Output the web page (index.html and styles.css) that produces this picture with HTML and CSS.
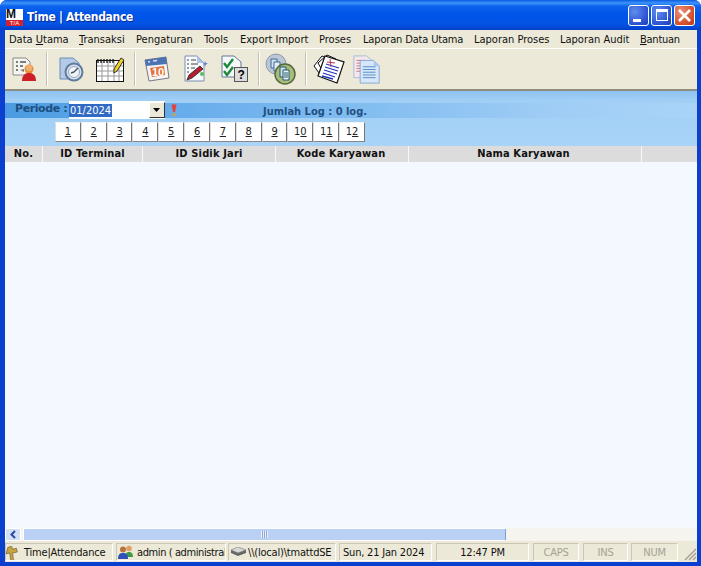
FILE: index.html
```html
<!DOCTYPE html>
<html>
<head>
<meta charset="utf-8">
<title>Time | Attendance</title>
<link rel="stylesheet" href="styles.css">
</head>
<body>
<div class="window">
  <div class="titlebar">
    <div class="app-logo"><span class="logo-m">M</span><span class="logo-bar">T/A</span></div>
    <div class="title">Time | Attendance</div>
    <div class="caption-btns">
      <div class="cbtn"><span class="min-glyph"></span></div>
      <div class="cbtn"><span class="max-glyph"></span></div>
      <div class="cbtn close"><svg width="21" height="21" viewBox="0 0 21 21"><path d="M5 5l11 11M16 5L5 16" stroke="#fff" stroke-width="2.6"/></svg></div>
    </div>
  </div>
  <div class="frame">
    <div class="menu">
      <span class="m1">Data <u>U</u>tama</span><span class="m2"><u>T</u>ransaksi</span><span class="m3">Pengaturan</span><span class="m4">Tools</span><span class="m5">Export Import</span><span class="m6">Proses</span><span class="m7">Laporan Data Utama</span><span class="m8">Laporan Proses</span><span class="m9">Laporan Audit</span><span class="m10"><u>B</u>antuan</span>
    </div>
    <div class="toolbar">
      <svg class="i28" viewBox="0 0 28 28"><path d="M3 3h13l4 4v13H3z" fill="#f4f4f0" stroke="#8a8a8a"/><path d="M6 7h2M6 11h2M6 15h2M10 7h6M10 11h3" stroke="#555" stroke-width="1.4"/><circle cx="19" cy="14" r="4.5" fill="#e98b32"/><circle cx="19" cy="13" r="3.2" fill="#f0b070"/><path d="M12 26c0-7 4-8 7-8s7 1 7 8z" fill="#cc1f26"/><path d="M10 15l4-1v3z" fill="#777"/></svg>
      <i class="sep"></i>
      <svg class="i28 clock" viewBox="0 0 28 28"><path d="M3 3h13l6 5v16H3z" fill="#b4cbe8" stroke="#6e8cb4"/><circle cx="17" cy="17" r="8.5" fill="#d8e2ee" stroke="#5f7a9e" stroke-width="2"/><circle cx="17" cy="17" r="5.5" fill="#eef3f8" stroke="#9ab"/><path d="M17 17l4-4M17 17l-3 1" stroke="#456" stroke-width="1.4"/></svg>
      <svg class="i30 cal" viewBox="0 0 30 30"><rect x="1.500" y="6.500" width="27" height="21" fill="#fff" stroke="#111"/><path d="M2 12h26M2 17h26M2 22h26M7 7v20M13 7v20M19 7v20M24 7v20" stroke="#999"/><path d="M3 5v4M6 5v4M9 5v4M12 5v4M15 5v4M18 5v4" stroke="#111" stroke-width="1.300"/><path d="M19 15l7-11 3 2-7 11-3 2z" fill="#f0d020" stroke="#333"/></svg>
      <i class="sep s2"></i>
      <svg class="i28 c10" viewBox="0 0 28 28"><path d="M2 5l21-3 3 21-20 3z" fill="#f4f4f4" stroke="#778"/><path d="M2 5l21-3 1 7-21 2z" fill="#4d73b5"/><path d="M5 7l2-.3M10 6l4-.6" stroke="#dde" stroke-width="1.500"/><path d="M7 13l14-2 1 9-13 2z" fill="#e8703a"/><text x="9" y="21" class="cal-num">10</text></svg>
      <svg class="i28 note" viewBox="0 0 28 28"><path d="M3 1h12l7 7v18H3z" fill="#f7f9fc" stroke="#7b8db0"/><path d="M15 1v7h7z" fill="#a9c4e8"/><path d="M5 5h2M5 9h2M5 13h2M5 17h2M9 5h5M9 9h7M9 13h4" stroke="#444" stroke-width="1.200"/><path d="M5 25l2-5 11-9 3 3-11 9z" fill="#b5202a" stroke="#222" stroke-width=".8"/><path d="M23 6l1 2 2 .5-2 1-.5 2-1-2-2-.5 2-1z" fill="#6a7fd0"/><circle cx="20" cy="19" r="2" fill="#58c060"/></svg>
      <svg class="i28 chk" viewBox="0 0 28 28"><path d="M1 1h12l7 6v15H1z" fill="#f5f8fb" stroke="#5e7896"/><path d="M3 8l3 4 6-8" fill="none" stroke="#1d8a3a" stroke-width="2.400"/><path d="M3 16l3 4 6-8" fill="none" stroke="#1d8a3a" stroke-width="2.400"/><rect x="13.500" y="12.500" width="13" height="14" fill="#dcdcdc" stroke="#555"/><text x="16.500" y="24" class="q">?</text></svg>
      <i class="sep s3"></i>
      <svg class="i32 cop" viewBox="0 0 32 32"><circle cx="11" cy="11" r="10" fill="#bcc6d4" stroke="#8f9bad"/><path d="M6 6h6v9H6z" fill="#cfe0f0" stroke="#3f6a96"/><path d="M9 9h6v9H9z" fill="#e6eff7" stroke="#3f6a96"/><circle cx="20" cy="21" r="10" fill="#a8bd7c" stroke="#55683c" stroke-width="1.500"/><path d="M15 14h6v10h-6z" fill="#cde1ea" stroke="#25596b"/><path d="M18 17h6v10h-6z" fill="#e8f4f7" stroke="#25596b"/><path d="M19 20h4M19 22h4M19 24h4" stroke="#25596b"/></svg>
      <i class="sep s4"></i>
      <svg class="i32 pap" viewBox="0 0 32 32"><path d="M1 13L9 3l9 4-9 17z" fill="#fff" stroke="#111"/><path d="M5 10l9-8 9 4-10 18z" fill="#fff" stroke="#111"/><path d="M12 3l19 6-7 21-19-7z" fill="#fff" stroke="#111" stroke-width="1.200"/><path d="M12 14l13 4M11 17l13 4M10 20l12 4M9 23l11 3M13 11l13 4" stroke="#2233bb" stroke-width="1.300"/><path d="M17 6l1 8M14 9l8 1" stroke="#c03050"/></svg>
      <svg class="doc" viewBox="0 0 32 32"><path d="M2 1h14l6 5v19H2z" fill="#f6e8ea" stroke="#9fb8d8"/><path d="M5 6h9M5 9h12M5 12h12M5 15h12M5 18h12" stroke="#d0707c"/><path d="M9 6h15l6 6v19H9z" fill="#d6e7f8" stroke="#7ea6d6"/><path d="M24 6v6h6z" fill="#a8c8ec"/><path d="M12 13h14M12 16h14M12 19h14M12 22h14M12 25h14" stroke="#4f86c8"/></svg>
    </div>
    <div class="divider"></div>
    <div class="panel">
      <div class="period-row">
        <span class="period-label">Periode :</span>
        <div class="combo"><span class="combo-val">01/2024</span><span class="combo-btn"><svg width="8" height="4" viewBox="0 0 8 4"><path d="M0 0h7L3.500 4z" fill="#000"/></svg></span></div>
        <svg class="excl" width="8" height="14" viewBox="0 0 8 14"><path d="M1.500 1.500h5L5 9H3z" fill="#e8403a"/><circle cx="4" cy="11.500" r="1.600" fill="#e0a030"/></svg>
        <span class="log">Jumlah Log : 0 log.</span>
      </div>
      <div class="tabs">
        <div class="tab"><u>1</u></div><div class="tab"><u>2</u></div><div class="tab"><u>3</u></div><div class="tab"><u>4</u></div><div class="tab"><u>5</u></div><div class="tab"><u>6</u></div><div class="tab"><u>7</u></div><div class="tab"><u>8</u></div><div class="tab"><u>9</u></div><div class="tab">1<u>0</u></div><div class="tab">1<u>1</u></div><div class="tab">1<u>2</u></div>
      </div>
    </div>
    <div class="thead">
      <div class="th c-no">No.</div>
      <div class="th c-term">ID Terminal</div>
      <div class="th c-sidik">ID Sidik Jari</div>
      <div class="th c-kode">Kode Karyawan</div>
      <div class="th c-nama">Nama Karyawan</div>
      <div class="th c-rest"></div>
    </div>
    <div class="tbody"></div>
    <div class="hscroll">
      <div class="sb-btn"><svg width="8" height="9" viewBox="0 0 8 9"><path d="M6 1L2.500 4.500 6 8" fill="none" stroke="#274b9f" stroke-width="2"/></svg></div>
      <div class="sb-thumb"><span class="grip"></span></div>
    </div>
    <div class="status">
      <div class="sf f1"><svg width="16" height="17" viewBox="0 0 17 17"><path d="M2 3l4-1 1 3 4-1 1 4-5 1 1 8H5L4 9 0 10z" fill="#c9a540" stroke="#6a5a30" stroke-width=".7"/></svg><span>Time|Attendance</span></div>
      <div class="sf f2"><svg width="16" height="14" viewBox="0 0 16 14"><circle cx="11" cy="3.500" r="2.800" fill="#e0a060"/><path d="M7 12c0-4 2-5 4-5s4 1 4 5z" fill="#3c9a48"/><circle cx="5" cy="4.500" r="3" fill="#b9743c"/><path d="M0 14c0-5 2-6 5-6s5 1 5 6z" fill="#2f50b8"/></svg><span>admin ( administral</span></div>
      <div class="sf f3"><svg width="17" height="10" viewBox="0 0 17 10"><path d="M1 3l7-3 8 3-8 3z" fill="#d8d8d8" stroke="#777" stroke-width=".6"/><path d="M1 3v3l7 3 8-3V3L8 6z" fill="#666"/></svg><span>\\(local)\tmattdSE</span></div>
      <div class="sf f4">Sun, 21 Jan 2024</div>
      <div class="sf f5">12:47 PM</div>
      <div class="sf f6 off">CAPS</div>
      <div class="sf f7 off">INS</div>
      <div class="sf f8 off">NUM</div>
      <div class="grip-corner"><svg width="14" height="14" viewBox="0 0 14 14"><path d="M13 2L2 13M13 6L6 13M13 10l-3 3" stroke="#a09c8c" stroke-width="1.300"/></svg></div>
    </div>
  </div>
</div>
</body>
</html>
```
FILE: styles.css
```css
* { box-sizing: border-box; }
html, body { margin: 0; padding: 0; }
body { width: 701px; height: 566px; overflow: hidden; font-family: "DejaVu Sans Condensed", "DejaVu Sans", sans-serif; font-size: 11px; color: #000; }
.window { width: 701px; height: 566px; display: flex; flex-direction: column; border-radius: 7px 7px 0 0; overflow: hidden; background: #0a3fd0; }
.titlebar { height: 30px; flex: none; display: flex; align-items: center; padding: 4px 3px 0 6px; background: linear-gradient(#0a5be0 0, #3d95fa 3px, #0e63ec 6px, #0055ea 14px, #0353e4 24px, #0240c8 30px); }
.app-logo { width: 17px; height: 17px; display: flex; flex-direction: column; background: #fff; flex: none; overflow: hidden; }
.logo-m { height: 11px; flex: none; font: bold 12px/11px "Liberation Sans", sans-serif; color: #111; }
.logo-bar { height: 6px; flex: none; background: #d8202a; color: #fff; font: 6px/6px "Liberation Sans", sans-serif; text-align: center; }
.title { margin-left: 4px; color: #fff; font: bold 12px "DejaVu Sans Condensed", "DejaVu Sans", sans-serif; letter-spacing: -.3px; text-shadow: 1px 1px 0 #0a2a90; flex: 1; }
.caption-btns { display: flex; gap: 2px; margin-top: -4px; margin-right: 3px; }
.cbtn { width: 21px; height: 21px; border: 1px solid #fff; border-radius: 3px; background: radial-gradient(circle at 30% 30%, #5f8cf0, #2a52d0 70%, #1e3eb0); position: relative; }
.cbtn.close { background: radial-gradient(circle at 30% 30%, #e89078, #d24c28 70%, #b83818); }
.cbtn.close svg { position: absolute; left: -1px; top: -1px; }
.min-glyph { position: absolute; left: 4px; bottom: 3px; width: 8px; height: 3px; background: #fff; }
.max-glyph { position: absolute; left: 4px; top: 3px; width: 12px; height: 12px; border: 1px solid #fff; border-top-width: 3px; }
.frame { flex: 1; display: flex; flex-direction: column; margin: 0 4px 4px 5px; background: #ece9d8; min-height: 0; }
.menu { height: 19px; flex: none; display: flex; align-items: center; padding-left: 4px; border-bottom: 1px solid #fff; white-space: nowrap; color: #111; }
.menu span { flex: none; }
.m1 { width: 70px; } .m2 { width: 57px; } .m3 { width: 68px; } .m4 { width: 36px; } .m5 { width: 79px; } .m6 { width: 44px; } .m7 { width: 111px; letter-spacing: -.16px; } .m8 { width: 86px; } .m9 { width: 80px; } .m10 { width: 50px; letter-spacing: -.25px; }
.toolbar { height: 40px; flex: none; display: flex; align-items: center; padding-left: 5px; background: #ece9d8; }
.toolbar svg { flex: none; }
.i28 { width: 28px; height: 28px; }
.i30 { width: 30px; height: 30px; }
.i32 { width: 32px; height: 32px; }
.sep { flex: none; width: 2px; height: 34px; margin-left: 8px; border-left: 1px solid #c5c2b2; border-right: 1px solid #fff; }
.clock { margin-left: 9px; }
.cal { margin-left: 10px; }
.sep.s2 { margin-left: 9px; }
.c10 { margin-left: 7px; }
.note { margin-left: 11px; }
.chk { margin-left: 11px; }
.sep.s3 { margin-left: 9px; }
.cop { margin-left: 5px; }
.sep.s4 { margin-left: 8px; }
.pap { margin-left: 6px; }
.doc { width: 29px; height: 29px; margin-left: 7px; }
.cal-num { font: bold 11px "Liberation Sans", sans-serif; fill: #fff; }
.q { font: bold 12px "Liberation Sans", sans-serif; fill: #000; }
.divider { height: 2px; flex: none; background: #8f8d80; }
.panel { height: 55px; flex: none; padding-top: 10px; background: linear-gradient(#8ec3f1, #a0cef5 9px, #a9d4f8 55px); }
.period-row { height: 18px; display: flex; align-items: center; background: linear-gradient(90deg, #4b9be2 0, #62a9ea 20%, #80bcf0 50%, #a0cdf5 80%, #a9d4f8 100%) 0 2px / 100% 15px no-repeat; }
.period-label { margin-left: 10px; width: 54px; font: bold 11px/16px "DejaVu Sans", sans-serif; letter-spacing: -.4px; color: #1f4f80; white-space: nowrap; margin-bottom: 2px; }
.combo { width: 96px; height: 18px; background: #fff; display: flex; justify-content: space-between; align-items: center; }
.combo-val { background: #316ac5; color: #fff; padding: 0 1px; line-height: 13px; }
.combo-btn { width: 16px; height: 16px; background: #ece9d8; border: 1px solid; border-color: #fff #333 #333 #fff; display: flex; align-items: center; justify-content: center; }
.excl { margin-left: 5px; flex: none; }
.log { margin-left: 85px; font: bold 11px "DejaVu Sans Condensed", "DejaVu Sans", sans-serif; color: #1f4f80; white-space: nowrap; margin-top: 2px; }
.tabs { display: flex; width: 310px; margin-left: 50px; margin-top: 3px; }
.tab { flex: 1; height: 20px; background: #fff; border: 1px solid; border-color: #f4f4f4 #777 #888 #ddd; text-align: center; line-height: 18px; color: #222; }
.thead { height: 16px; flex: none; display: flex; background: #dcdcdc; }
.th { flex: none; font: bold 11px "DejaVu Sans Condensed", "DejaVu Sans", sans-serif; text-align: center; line-height: 16px; border-right: 1px solid #f8f8f8; color: #111; letter-spacing: .15px; }
.c-no { width: 38px; } .c-term { width: 100px; } .c-sidik { width: 133px; } .c-kode { width: 133px; padding-right: 2px; } .c-nama { width: 233px; padding-right: 3px; } .c-rest { flex: 1; border-right: 0; }
.tbody { flex: 1; background: #f4f8ff; min-height: 0; }
.hscroll { height: 14px; flex: none; display: flex; background: #f5f4ee; align-items: stretch; border-top: 1px solid #f8f8f8; }
.sb-btn { width: 16px; background: #d2dff5; border: 1px solid #fff; border-radius: 2px; display: flex; align-items: center; justify-content: center; }
.sb-thumb { width: 483px; margin-left: 2px; background: #bbd0f5; border: 1px solid #fff; border-right: 1px solid #7f9bd0; border-radius: 2px; display: flex; align-items: center; justify-content: center; }
.grip { width: 7px; height: 7px; background: repeating-linear-gradient(90deg, #e8f0fc 0, #e8f0fc 1px, #8fa8d8 1px, #8fa8d8 2px); }
.status { height: 21px; flex: none; display: flex; align-items: stretch; padding: 2px 0 1px; white-space: nowrap; color: #111; letter-spacing: -.2px; background: #ece9d8; }
.sf { flex: none; border: 1px solid; border-color: #c9c6b6 #fff #fff #c9c6b6; display: flex; align-items: center; padding-left: 3px; overflow: hidden; gap: 2px; }
.sf span, .f4, .f5, .f6, .f7, .f8 { padding-top: 1px; }
.f1 { width: 108px; margin-right: 3px; padding-left: 0; gap: 2px; } .f2 { width: 110px; margin-right: 2px; padding-left: 1px; gap: 3px; letter-spacing: -.4px; } .f3 { width: 108px; margin-right: 3px; padding-left: 1px; gap: 1px; } .f4 { width: 93px; margin-right: 4px; } .f5 { width: 93px; margin-right: 4px; justify-content: center; padding-left: 0; } .f6 { width: 46px; margin-right: 4px; } .f7 { width: 45px; margin-right: 3px; } .f8 { width: 47px; }
.f6, .f7, .f8 { justify-content: center; padding-left: 0; color: #a5a294; }
.sf svg { flex: none; }
.grip-corner { flex: 1; display: flex; align-items: flex-end; justify-content: flex-end; }
```
